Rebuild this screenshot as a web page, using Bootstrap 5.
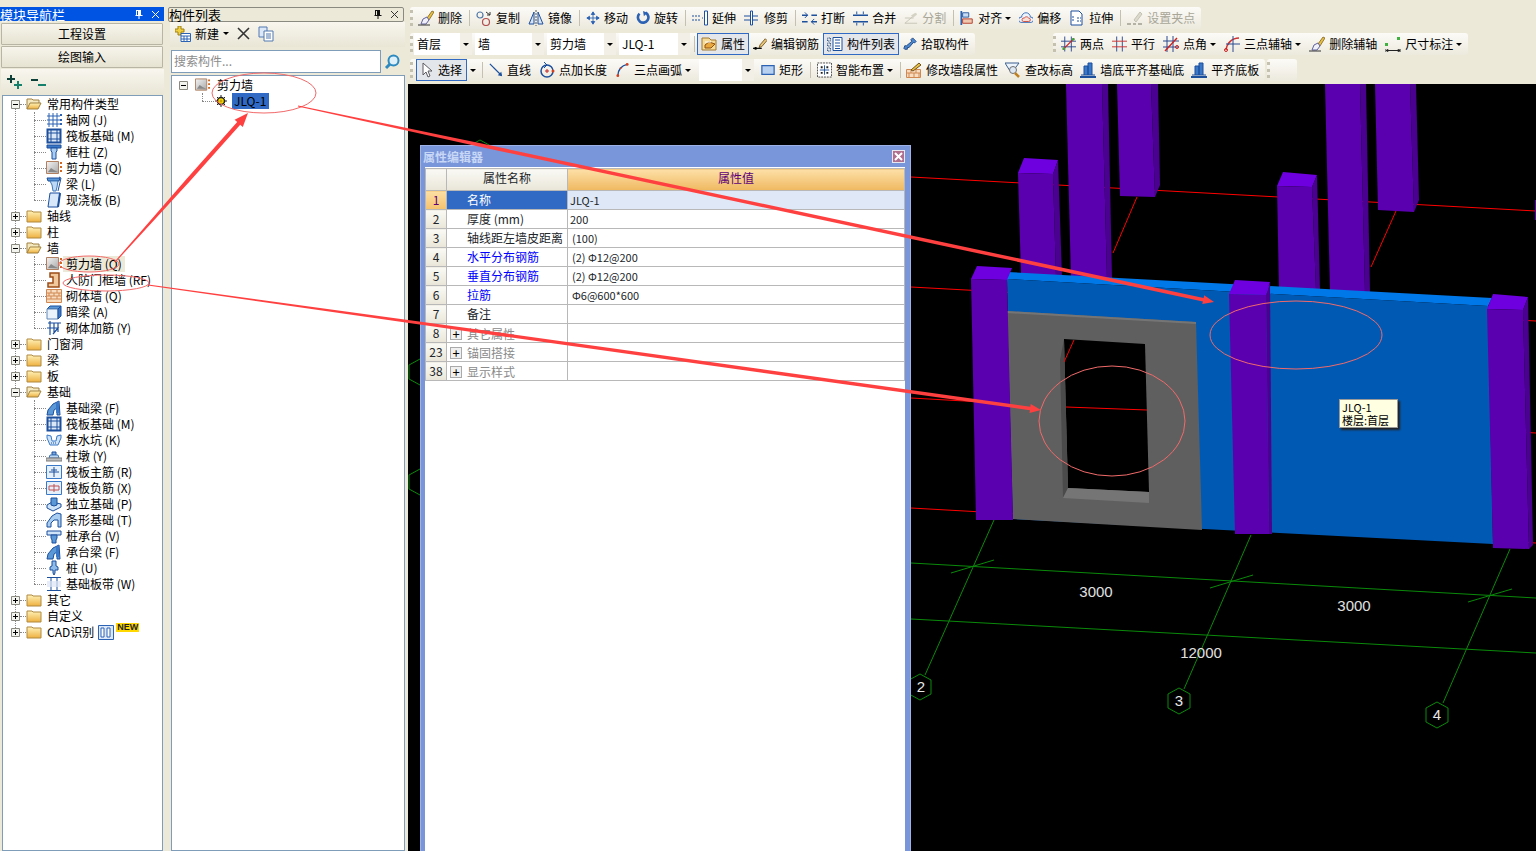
<!DOCTYPE html>
<html lang="zh-CN">
<head>
<meta charset="UTF-8">
<meta name="viewport" content="width=device-width, initial-scale=1.0">
<title>模块导航栏</title>
<link href="https://cdn.jsdelivr.net/npm/bootstrap@5.3.0/dist/css/bootstrap.min.css" rel="stylesheet">
<style>
html, body { height: 100%; }
body { background: #ece9d8; font-family: "Noto Sans CJK SC", "Liberation Sans", sans-serif; font-size: 12px; line-height: 16px; color: #000; overflow: hidden; }
svg { display: block; flex: none; }
.app-root { height: 851px; position: relative; }

/* side panels */
.nav-col { width: 164px; padding-top: 7px; flex: none; }
.list-col { width: 237px; margin-left: 4px; padding-top: 7px; flex: none; }
.pane-title { height: 14px; font-size: 13px; line-height: 13px; padding-right: 4px; }
.pane-title.on { background: #0054e3; color: #fff; }
.pane-title.off { background: #ece9d8; border: 1px solid #8a8a80; border-radius: 2px; height: 15px; margin-right: 1px; }
.nav-btn { display: block; width: 162px; margin: 1px 0 0 1px; height: 22px; padding: 0; font-size: 12px; line-height: 20px; color: #000; border: 1px solid #b8b5a4; border-radius: 1px; background: linear-gradient(#f7f5ec, #e6e3d2); }
.nav-btn:first-of-type { margin-top: 2px; }
.expand-bar { height: 26px; margin: 1px 0 0 1px; padding-left: 6px; gap: 8px; background: linear-gradient(#f8f6ee, #e9e6d6); }
.tree-box { background: #fff; border: 1px solid #7f9db9; margin-left: 2px; }
.nav-tree { height: 756px; width: 161px; }
.tree-list { position: relative; }
.tree-list::before { content: ""; position: absolute; left: 12px; top: 8px; bottom: 8px; border-left: 1px dotted #888; }
.tree-row { height: 16px; display: flex; align-items: center; position: relative; white-space: nowrap; }
.root-row { padding-left: 8px; }
.root-row::before { content: ""; position: absolute; left: 17px; top: 8px; width: 6px; border-top: 1px dotted #888; }
.root-row .fold { margin-left: 6px; margin-right: 5px; position: relative; }
.root-row .exp { position: relative; z-index: 1; }
.tree-kids { position: relative; }
.tree-kids::before { content: ""; position: absolute; left: 31px; top: 0; bottom: 8px; border-left: 1px dotted #888; }
.kid-row { padding-left: 43px; gap: 4px; }
.kid-row::before { content: ""; position: absolute; left: 31px; top: 8px; width: 12px; border-top: 1px dotted #888; }
.hot-label { background: #ece9d8; padding: 0 3px; margin-left: -3px; }
.new-tag { background: #ffd800; color: #222; font: bold 9px/9px "Liberation Sans", sans-serif; padding: 0 1px; margin: -9px 0 0 2px; }

.list-tools { height: 25px; padding: 0 0 2px 5px; margin: 0 0 0 2px; background: linear-gradient(#f8f6ee, #e9e6d6); }
.list-search { margin: 3px 0 0 3px; height: 23px; width: 233px; }
.list-search .form-control { height: 23px; min-height: 0; padding: 0 2px 3px; font-size: 12px; line-height: 16px; border: 1px solid #7f9db9; border-radius: 0; }
.list-search .form-control::placeholder { color: #8c8c8c; }
.find-btn { width: 24px; flex: none; background: #ece9d8; }
.list-tree { margin-left: 3px; margin-top: 2px; height: 776px; width: 234px; padding-top: 1px; position: relative; }
.list-tree .tree-row.top { padding-left: 7px; gap: 7px; }
.list-tree .tree-row.sub { padding-left: 43px; gap: 5px; }
.list-tree .tree-row.sub::before { content: ""; position: absolute; left: 30px; top: 8px; width: 12px; border-top: 1px dotted #888; }
.list-tree .tree-row.sub::after { content: ""; position: absolute; left: 30px; top: 0; height: 8px; border-left: 1px dotted #888; }
.sel-node { background: #316ac5; padding: 0 3px 0 2px; width: 37px; }

/* toolbars */
.work-col { margin-left: 3px; min-width: 0; }
.tool-area { height: 84px; padding-top: 5px; flex: none; }
.tool-strip { height: 26px; padding-left: 2px; align-items: center; }
.tool-bar { height: 22px; display: flex; align-items: center; padding-right: 2px; border-radius: 3px; background: linear-gradient(#fcfbf7, #ece9dd); white-space: nowrap; }
.grip { width: 3px; height: 16px; margin: 0 1px 0 0; border-left: 3px dotted #c4c1b0; }
.tool-btn { display: flex; align-items: center; gap: 4px; padding: 0 4px; height: 22px; }
.tool-btn.off { color: #a8a698; }
.tool-btn.lit { background: #e3e6ea; border: 1px solid #316ac5; padding: 0 3px; }
.tool-btn.pick-on { margin-left: 2px; padding: 0 4px; gap: 5px; }
.tool-btn.tight { padding-left: 3px; }
.tool-sep { width: 1px; height: 16px; margin: 0 2px 0 3px; background: #c4c1b0; }
.tool-sep.near { margin-left: 1px; }
.caret-mark { width: 0; height: 0; border-left: 3px solid transparent; border-right: 3px solid transparent; border-top: 3px solid #000; margin-left: -1px; }
.caret-side { margin: 0 3px; }
.combo-box { height: 22px; margin-right: 3px; background: #fff; display: flex; justify-content: space-between; align-items: center; padding-left: 3px; }
.combo-box.shift { margin-left: 4px; }
.combo-arrow { width: 12px; height: 22px; background: #f2f0e6; display: flex; align-items: center; justify-content: center; }
.combo-arrow .caret-mark { margin: 0; }
.gap-two { margin-left: 78px; }
.gap-one { margin-left: 2px; }

/* canvas */
.scene-box { background: #000; position: relative; overflow: hidden; }
.scene-svg { position: absolute; left: 0; top: 0; }
.dim-label { font: 15px "Liberation Sans", sans-serif; fill: #e0e0e0; text-anchor: middle; }
.axis-label { font: 15px "Liberation Sans", sans-serif; fill: #e8e8e8; text-anchor: middle; }
.hover-tip { position: absolute; left: 931px; top: 315px; width: 59px; height: 29px; background: #ffffe1; border: 1px solid #999; box-shadow: 2px 2px 2px #222; padding: 1px 2px; font-size: 11px; line-height: 13px; }

/* property dialog */
.prop-win { position: absolute; left: 12px; top: 61px; width: 491px; bottom: 0; background: #7a96da; border: 1px solid #9db3e8; border-bottom: 0; padding: 0 5px 0 4px; display: flex; flex-direction: column; }
.prop-head { height: 21px; flex: none; color: #c7d7f5; font-size: 12px; font-weight: 700; line-height: 18px; margin-left: -2px; }
.prop-x { width: 13px; height: 13px; background: #b07090; border: 1px solid #e8e8f0; color: #fff; }
.prop-body { background: #fff; flex: 1; padding-top: 1px; }
.prop-table { table-layout: fixed; width: 480px; margin: 0; border-collapse: collapse; --bs-table-bg: transparent; }
.prop-table th, .prop-table td { height: 19px; padding: 0; border: 1px solid #b8b8b8; font-weight: 400; line-height: 14px; font-size: 12px; white-space: nowrap; overflow: hidden; vertical-align: middle; }
.prop-table thead th { height: 22px; padding-bottom: 3px; text-align: center; vertical-align: middle; background: linear-gradient(#faf9f4, #e9e6d8); }
.prop-table thead th.val-head { background: linear-gradient(#fde0a8, #efb860); color: #5c007a; }
.prop-table .num { width: 21px; text-align: center; background: linear-gradient(#faf9f4, #e9e6d8); }
.prop-table .num.cur { background: linear-gradient(#fddfa4, #f5c26e); color: #5c007a; }
.prop-table .nm { padding-left: 20px; }
.prop-table .nm.cur { background: #316ac5; color: #fff; }
.prop-table .nm-head { width: 121px; }
.prop-table .vl { padding-left: 4px; font-size: 11px; }
.prop-table .vl.cur { background: #dfe8f6; }
.prop-table .vl.flush { padding-left: 2px; }
.prop-table .link-name { color: #0000ff; }
.prop-table .dim-name { color: #8a8a8a; padding-left: 3px; }
.dim-name span { display: inline-block; vertical-align: middle; }
.plus-box { width: 12px; height: 12px; border: 1px solid #aaa; background: #f0f0f0; color: #000; line-height: 9px; text-align: center; margin-right: 5px; font-size: 13px; }

.note-layer { position: absolute; left: 0; top: 0; pointer-events: none; }
</style>
</head>
<body>

<svg width="0" height="0" class="position-absolute">
  <defs>
    <linearGradient id="gFold" x1="0" y1="0" x2="0" y2="1"><stop offset="0" stop-color="#fff2b8"/><stop offset="1" stop-color="#eeb040"/></linearGradient>
    <linearGradient id="gWall" x1="0" y1="0" x2="1" y2="1"><stop offset="0" stop-color="#f4f4f4"/><stop offset="1" stop-color="#a8a8a8"/></linearGradient>
    <symbol id="i-closed" viewBox="0 0 16 16"><path d="M1 4V3h5l1 1h8v10H1z" fill="url(#gFold)" stroke="#b08a40"/></symbol>
    <symbol id="i-open" viewBox="0 0 16 16"><path d="M1 13V3h5l1 1h6v3" fill="#f4e8c0" stroke="#a08040"/><path d="M1 13l3-6h11l-3 6z" fill="url(#gFold)" stroke="#a08040"/></symbol>
    <symbol id="i-grid" viewBox="0 0 16 16"><path d="M3 1v14M7 1v14M11 1v14M1 4h13M1 8h13M1 12h13" stroke="#2c62b4" fill="none"/><path d="M14 2h2v2h-2zM14 7h2v2h-2zM14 11h2v2h-2z" fill="#2c62b4"/></symbol>
    <symbol id="i-raft" viewBox="0 0 16 16"><path d="M1.500 1.500h13v13h-13z" fill="#dbe6f6" stroke="#1c4f9c" stroke-width="2"/><path d="M5 1v14M11 1v14M1 5h14M1 11h14" stroke="#1c4f9c"/></symbol>
    <symbol id="i-col" viewBox="0 0 16 16"><path d="M1 1h14v3H1z" fill="#3a78c8" stroke="#1c4f9c"/><path d="M5 4h6v3l-1 1v7H6V8L5 7z" fill="#a8cdf0" stroke="#1c4f9c"/></symbol>
    <symbol id="i-wall" viewBox="0 0 16 16"><path d="M.5 1.500h12v12H.5z" fill="url(#gWall)" stroke="#b08060"/><path d="M2 12l3-4 3 2 4 2z" fill="#888"/><path d="M14 2h2v2h-2zM14 6h2v2h-2zM14 10h2v2h-2z" fill="#d06820"/></symbol>
    <symbol id="i-beam" viewBox="0 0 16 16"><path d="M1 2h13l-1 3H2z" fill="#5a98d8" stroke="#1c4f9c"/><path d="M4 5h8l-1 6-1 4H7L6 9z" fill="#bcd8f4" stroke="#4078b8"/><path d="M13 1l2 1-3 13" stroke="#1c4f9c" fill="none"/></symbol>
    <symbol id="i-slab" viewBox="0 0 16 16"><path d="M4 1h10l-2 14H2z" fill="#d8e8fa" stroke="#1c4f9c"/><path d="M12 15l2-14" stroke="#1c4f9c" stroke-width="2"/></symbol>
    <symbol id="i-door" viewBox="0 0 16 16"><path d="M4 1h9v14H2v-4h5V5H4z" fill="#f0c89c" stroke="#9c4c18" stroke-width="1.500"/></symbol>
    <symbol id="i-brick" viewBox="0 0 16 16"><path d="M.5 1.500h15v13H.5z" fill="#f8dcc0" stroke="#d08850"/><path d="M1 5h14M1 8h14M1 11h14M5 2v3M11 2v3M3 5v3M8 5v3M13 5v3M5 8v3M11 8v3" stroke="#d08850" fill="none"/></symbol>
    <symbol id="i-hbeam" viewBox="0 0 16 16"><path d="M1 5l3-3h11l-3 3z" fill="#5a98d8" stroke="#1c4f9c"/><path d="M1 5h11v10H1z" fill="#eaf2fb" stroke="#6088b8"/><path d="M12 5l3-3v10l-3 3z" fill="#3a78c8" stroke="#1c4f9c"/></symbol>
    <symbol id="i-rebar" viewBox="0 0 16 16"><path d="M2 3h13M4 1v14M8 3v9M12 3v9M1 8h11l-5 6" stroke="#1c4f9c" fill="none" stroke-width="1.200"/></symbol>
    <symbol id="i-fbeam" viewBox="0 0 16 16"><path d="M1 15l1-5 5-6 6-3 1 14h-3V8L8 10l-1 5z" fill="#5a98d8" stroke="#1c4f9c"/><path d="M10 3l3-2v12h-3z" fill="#3a78c8"/></symbol>
    <symbol id="i-pit" viewBox="0 0 16 16"><path d="M1 3l4 1 1 5h4l1-5 4-1v3l-3 7H4L1 6z" fill="#cfe4f8" stroke="#3a78c8"/><path d="M5 11h6" stroke="#1c4f9c" stroke-dasharray="1 1"/></symbol>
    <symbol id="i-pier" viewBox="0 0 16 16"><path d="M6 4h4v3H6z" fill="#7aa8dc" stroke="#1c4f9c"/><path d="M4 7h8l1 3H3z" fill="#bcd8f4" stroke="#4078b8"/><path d="M0 10h16v3H0z" fill="#bdbdbd" stroke="#7c7c7c"/></symbol>
    <symbol id="i-main" viewBox="0 0 16 16"><path d="M.5 1.500h15v13H.5z" fill="#e6f0fa" stroke="#3a78c8"/><path d="M8 3v10M3 8h10M5 6h6" stroke="#1c4f9c" fill="none"/></symbol>
    <symbol id="i-neg" viewBox="0 0 16 16"><path d="M.5 1.500h15v13H.5z" fill="#e6f0fa" stroke="#3a78c8"/><path d="M8 4v8M3 6h10v4H3z" stroke="#c05050" fill="none"/></symbol>
    <symbol id="i-iso" viewBox="0 0 16 16"><path d="M1 9l5-3 9 2v3l-8 4-6-3z" fill="#cfe4f8" stroke="#1c4f9c"/><path d="M5 2h6v7l-3 1-3-1z" fill="#5a98d8" stroke="#1c4f9c"/></symbol>
    <symbol id="i-strip" viewBox="0 0 16 16"><path d="M1 15V11l5-7 5-3 4 1v13h-3V8H8l-3 3v4z" fill="#a8cdf0" stroke="#1c4f9c"/></symbol>
    <symbol id="i-cap" viewBox="0 0 16 16"><path d="M1 3h14v4H1z" fill="#cfe4f8" stroke="#1c4f9c"/><path d="M5 7h6v3l-1 2v3H6v-3L5 10z" fill="#5a98d8" stroke="#1c4f9c"/></symbol>
    <symbol id="i-pile" viewBox="0 0 16 16"><path d="M6 1h4v5l2 1v3H9v3l-1 2-1-2v-3H4V7l2-1z" fill="#8fbbe8" stroke="#1c4f9c"/></symbol>
    <symbol id="i-band" viewBox="0 0 16 16"><path d="M1 1.500h14M1 14.500h14M5 2v12M11 2v12" stroke="#1c4f9c" fill="none"/><path d="M1 5h14v6H1z" fill="#dbe6f6" opacity=".7"/></symbol>
    <symbol id="i-del" viewBox="0 0 16 16"><path d="M9 8l5-7 2 1-5 8z" fill="#e8c040" stroke="#806020" stroke-width=".8"/><path d="M5 9l4-2 2 3-3 4H3z" fill="#f0f0f8" stroke="#6060a0"/><path d="M0 15h12" stroke="#333"/></symbol>
    <symbol id="i-copy" viewBox="0 0 16 16"><circle cx="4" cy="5" r="3" fill="none" stroke="#5078a8" stroke-width="1.200"/><circle cx="10" cy="12" r="3.500" fill="none" stroke="#b05050" stroke-width="1.200"/><path d="M10 2l4 3M14 2v3h-3" stroke="#333" fill="none"/></symbol>
    <symbol id="i-mirror" viewBox="0 0 16 16"><path d="M8 0v16" stroke="#555" stroke-dasharray="2 1"/><path d="M6 2v12H1zM10 2v12h5z" fill="#d8e4f4" stroke="#1c4f9c"/></symbol>
    <symbol id="i-move" viewBox="0 0 16 16"><path d="M8 1v14M1 8h14M8 1L6 4h4zM8 15l-2-3h4zM1 8l3-2v4zM15 8l-3-2v4z" fill="#2c62b4" stroke="#2c62b4"/></symbol>
    <symbol id="i-rot" viewBox="0 0 16 16"><path d="M4 3a6 6 0 1 0 7-1" fill="none" stroke="#2c62b4" stroke-width="3"/><path d="M8 0l5 2-4 4z" fill="#2c62b4"/></symbol>
    <symbol id="i-ext" viewBox="0 0 16 16"><path d="M0 6h8M0 10h8" stroke="#1c4f9c" stroke-dasharray="2 1"/><path d="M10 8h1" stroke="#1c4f9c"/><path d="M12.500 1h3v14h-3z" fill="#fff" stroke="#1c4f9c"/></symbol>
    <symbol id="i-trim" viewBox="0 0 16 16"><path d="M0 6h15M0 10h15" stroke="#1c4f9c" stroke-dasharray="6 2"/><path d="M6.500 1h2v14h-2z" fill="#fff" stroke="#1c4f9c"/></symbol>
    <symbol id="i-brk" viewBox="0 0 16 16"><path d="M0 5h6M10 5h6M0 12h6M10 12h6" stroke="#1c4f9c" stroke-width="1.500"/><path d="M3 2l3 3-3 3M13 9l-3 3 3 3" stroke="#1c4f9c" fill="none"/></symbol>
    <symbol id="i-mrg" viewBox="0 0 16 16"><path d="M0 5h16M0 12h16" stroke="#1c4f9c" stroke-width="1.500"/><path d="M4 1v3M11 1v3M4 13v3M11 13v3" stroke="#1c4f9c"/></symbol>
    <symbol id="i-split" viewBox="0 0 16 16"><path d="M1 14L14 3M1 8h10M1 14h14" stroke="#c4c2b4" fill="none"/><path d="M8 5l5-3 2 2-5 4z" fill="#d4d2c4"/></symbol>
    <symbol id="i-align" viewBox="0 0 16 16"><path d="M1.500 0v16" stroke="#2c62b4" stroke-width="2"/><path d="M3 2h7v5H3z" fill="#c8dcf4" stroke="#1c4f9c"/><path d="M3 9h11v5H3z" fill="#f0c8b0" stroke="#b03020"/></symbol>
    <symbol id="i-offs" viewBox="0 0 16 16"><path d="M2 13a3 3 0 0 1 1-6 5 5 0 0 1 10 0 3 3 0 0 1 1 6z" fill="#eef4fc" stroke="#2c62b4"/><path d="M5 12a2 2 0 0 1 1-4 3 3 0 0 1 5 0 2 2 0 0 1 0 4z" fill="#f8e0d8" stroke="#c84030"/></symbol>
    <symbol id="i-str" viewBox="0 0 16 16"><path d="M2 1h8l3 3v11H2z" fill="#fff" stroke="#1c4f9c"/><path d="M8 8h4M8 11h4M4 6v6" stroke="#1c4f9c" stroke-dasharray="2 1"/></symbol>
    <symbol id="i-grip" viewBox="0 0 16 16"><path d="M7 10l6-8 2 2-6 8z" fill="#dcdacc" stroke="#c4c2b4"/><path d="M0 14h4M6 14h3M11 14h4" stroke="#b4b2a4" stroke-width="2"/></symbol>
    <symbol id="i-attr" viewBox="0 0 16 16"><path d="M1 2h7l2 2h5v10H1z" fill="#f4dc98" stroke="#a07830"/><path d="M4 9l4-3 6 2-4 4H4z" fill="#e8a840" stroke="#905010"/><path d="M4 6h6" stroke="#fff"/></symbol>
    <symbol id="i-edit" viewBox="0 0 16 16"><path d="M8 9l6-7 2 2-6 7-3 1z" fill="#e8c878" stroke="#705020"/><path d="M0 13h10" stroke="#111" stroke-width="1.500"/><circle cx="3" cy="13" r="1.500"/></symbol>
    <symbol id="i-list" viewBox="0 0 16 16"><path d="M.500 2h3v3h-3zM.500 7h3v3h-3zM.500 12h3v3h-3z" fill="none" stroke="#3a5f90" stroke-dasharray="1 .500"/><path d="M6 1.500h9v13H6z" fill="#fff" stroke="#1c4f9c"/><path d="M8 4h5M8 7h5M8 10h5M8 12.500h5" stroke="#1c4f9c"/></symbol>
    <symbol id="i-pick" viewBox="0 0 16 16"><path d="M11 1l4 4-2 2-1-1-5 6H5v2H2l-1-1 1-3h2l6-5-1-2z" fill="#4a88d0" stroke="#1c3f7c"/></symbol>
    <symbol id="i-two" viewBox="0 0 16 16"><path d="M4 0v16M11 0v16M0 5h16M0 11h16" stroke="#2c4a90" fill="none"/><path d="M2 14L14 2" stroke="#d02020" stroke-width="1.400"/><circle cx="3" cy="13" r="1.500" fill="#40a040"/><circle cx="13" cy="3" r="1.500" fill="#40a040"/></symbol>
    <symbol id="i-par" viewBox="0 0 16 16"><path d="M5 0v16M11 0v16" stroke="#2c4a90"/><path d="M0 5h16M0 11h16" stroke="#d03030"/></symbol>
    <symbol id="i-ang" viewBox="0 0 16 16"><path d="M4 0v16M10 0v16M0 5h16M0 11h16" stroke="#2c4a90"/><path d="M2 15L14 2" stroke="#d02020" stroke-width="1.400"/><circle cx="14" cy="11" r="1.500" fill="none" stroke="#d02020"/></symbol>
    <symbol id="i-arc3" viewBox="0 0 16 16"><path d="M2 14C3 7 8 2 15 2" fill="none" stroke="#d03030" stroke-width="1.400"/><path d="M9 0v16M2 8h14" stroke="#2c4a90"/><circle cx="2" cy="14" r="1.500" fill="none" stroke="#d02020"/></symbol>
    <symbol id="i-dim" viewBox="0 0 16 16"><path d="M0 13v3M15 13v3M1 14.500h14M1 14.500l2-1v2zM15 14.500l-2-1v2z" stroke="#222" fill="none"/><path d="M0 7h3v3H0zM12 1h3v3h-3z" fill="#40b040"/></symbol>
    <symbol id="i-sel" viewBox="0 0 12 16"><path d="M2 1v12l3-3 2 5 2-1-2-5h4z" fill="#fff" stroke="#5a5a60"/></symbol>
    <symbol id="i-line" viewBox="0 0 16 16"><path d="M1 1l13 13" stroke="#1c4f9c" stroke-width="1.400"/><path d="M15 15l-5-1 4-4z" fill="#1c4f9c"/></symbol>
    <symbol id="i-len" viewBox="0 0 16 16"><circle cx="8" cy="9" r="6" fill="none" stroke="#1c4f9c" stroke-width="1.500"/><path d="M5 0l3 3-3 3" fill="none" stroke="#1c4f9c"/><path d="M6 9h4M8 7v4" stroke="#c02020"/><circle cx="14" cy="9" r="1.500" fill="#d04020"/></symbol>
    <symbol id="i-arc" viewBox="0 0 16 16"><path d="M3 14C3 8 7 3 13 2" fill="none" stroke="#1c4f9c" stroke-width="1.500"/><circle cx="3" cy="14" r="1.500" fill="#d04020"/><circle cx="13" cy="2" r="1.500" fill="#d04020"/><circle cx="6" cy="6" r="1" fill="#d04020"/></symbol>
    <symbol id="i-rect" viewBox="0 0 16 16"><path d="M1 3h14v10H1z" fill="#b8d0f0" stroke="#2c62b4" stroke-width="1.400"/></symbol>
    <symbol id="i-smart" viewBox="0 0 16 16"><path d="M.5.500h15v15H.5z" fill="#fff" stroke="#444" stroke-dasharray="2 1"/><path d="M8 3v10M3 8h10" stroke="#1c4f9c"/><path d="M4 4h2v2H4zM10 4h2v2h-2zM4 10h2v2H4zM10 10h2v2h-2z" fill="#222"/></symbol>
    <symbol id="i-mod" viewBox="0 0 16 16"><path d="M.5 7.500h14v8H.5z" fill="#f8dcc0" stroke="#d08850"/><path d="M1 11h14M5 8v3M10 8v3M3 11v4M8 11v4M13 11v4" stroke="#d08850"/><path d="M5 8l8-7 2 2-8 6z" fill="#e8c040" stroke="#705020"/></symbol>
    <symbol id="i-lvl" viewBox="0 0 16 16"><path d="M0 1h14L8 9H5z" fill="#eef4fc" stroke="#3a5f90"/><circle cx="8" cy="8" r="3.500" fill="#dce8f4" stroke="#707070"/><path d="M10 11l4 4" stroke="#c08020" stroke-width="2.500"/></symbol>
    <symbol id="i-base" viewBox="0 0 16 16"><path d="M4 4h4v9H4zM8 1h4v12H8z" fill="#3a78c8" stroke="#1c4f9c"/><path d="M0 15h16" stroke="#1c4f9c" stroke-width="2"/><path d="M1 13h3M12 13h3" stroke="#1c4f9c"/></symbol>
    <symbol id="i-add" viewBox="0 0 16 16"><path d="M3 0h3v3h3v3H6v3H3V6H0V3h3z" fill="#f0d040" stroke="#a08010"/><path d="M6 7.500h9.500v8H6z" fill="#fff" stroke="#2c62b4"/><path d="M6 10h10M9 10v5M12 10v5M6 13h10" stroke="#2c62b4"/></symbol>
    <symbol id="i-paste" viewBox="0 0 16 16"><path d="M1 1h8v10H1z" fill="#dce8f8" stroke="#5078b0"/><path d="M6 5h9v10H6z" fill="#fff" stroke="#5078b0"/><path d="M8 8h5M8 10h5M8 12h5" stroke="#5078b0"/></symbol>
    <symbol id="i-gear" viewBox="0 0 12 12"><circle cx="6" cy="6" r="3.500" fill="#ffe000" stroke="#222" stroke-width="1.500"/><path d="M6 0v3M6 9v3M0 6h3M9 6h3M2 2l2 2M8 8l2 2M10 2L8 4M4 8l-2 2" stroke="#222"/><circle cx="6" cy="6" r="1.500" fill="#d0a000"/></symbol>
    <symbol id="i-find" viewBox="0 0 16 16"><circle cx="9.500" cy="6.500" r="5" fill="#dff0fa" stroke="#2c8ac0" stroke-width="2"/><path d="M6 10l-4 4" stroke="#2c8ac0" stroke-width="3"/></symbol>
  </defs>
</svg>

<div class="app-root d-flex">

  <!-- 模块导航栏 -->
  <div class="nav-col d-flex flex-column">
    <div class="pane-title on d-flex justify-content-between align-items-center">
      <span>模块导航栏</span>
      <span class="d-flex gap-2 align-items-center">
        <svg width="9" height="11" viewBox="0 0 9 11"><path d="M2 1h5v5h1.500v1h-3v3h-1V7h-3V6H2zM3 2v4h1V2z" fill="#fff"/></svg>
        <svg width="9" height="9" viewBox="0 0 9 9"><path d="M1 1l7 7M8 1L1 8" stroke="#fff"/></svg>
      </span>
    </div>
    <button type="button" class="btn nav-btn">工程设置</button>
    <button type="button" class="btn nav-btn">绘图输入</button>
    <div class="expand-bar d-flex align-items-center">
      <svg width="16" height="16" viewBox="0 0 16 16"><path d="M3 1h2v3h3v2H5v3H3V6H0V4h3z" fill="#0c4038"/><path d="M10 7h2v3h3v2h-3v3h-2v-3H7v-2h3z" fill="#15806c"/></svg>
      <svg width="16" height="16" viewBox="0 0 16 16"><path d="M0 5h7v2H0z" fill="#0c4038"/><path d="M7 10h8v2H7z" fill="#15806c"/></svg>
    </div>
    <div class="tree-box nav-tree"><div class="tree-list" id="navTree"></div></div>
  </div>

  <!-- 构件列表 -->
  <div class="list-col d-flex flex-column">
    <div class="pane-title off d-flex justify-content-between align-items-center">
      <span>构件列表</span>
      <span class="d-flex gap-2 align-items-center">
        <svg width="9" height="11" viewBox="0 0 9 11"><path d="M2 1h5v5h1.500v1h-3v3h-1V7h-3V6H2zM3 2v4h1V2z" fill="#111"/></svg>
        <svg width="9" height="9" viewBox="0 0 9 9"><path d="M1 1l7 7M8 1L1 8" stroke="#333"/></svg>
      </span>
    </div>
    <div class="list-tools d-flex align-items-center">
      <svg width="16" height="16"><use href="#i-add"/></svg>
      <span class="ms-1">新建</span>
      <span class="caret-mark ms-1"></span>
      <svg class="ms-2" width="13" height="13" viewBox="0 0 13 13"><path d="M1 1l11 11M12 1L1 12" stroke="#333" stroke-width="1.600"/></svg>
      <svg class="ms-2" width="16" height="16"><use href="#i-paste"/></svg>
    </div>
    <div class="input-group flex-nowrap list-search">
      <input type="text" class="form-control" placeholder="搜索构件...">
      <span class="find-btn d-flex align-items-center justify-content-center"><svg width="16" height="16"><use href="#i-find"/></svg></span>
    </div>
    <div class="tree-box list-tree">
      <div class="tree-row top">
        <svg class="exp" width="9" height="9" viewBox="0 0 9 9"><path d="M.5.500h8v8h-8z" fill="#f4f4ee" stroke="#8a8a80"/><path d="M2 4.500h5" stroke="#000"/></svg>
        <svg width="15" height="16"><use href="#i-wall"/></svg>
        <span>剪力墙</span>
      </div>
      <div class="tree-row sub">
        <svg width="12" height="12"><use href="#i-gear"/></svg>
        <span class="sel-node">JLQ-1</span>
      </div>
    </div>
  </div>

  <!-- 工具栏和绘图区 -->
  <div class="work-col flex-grow-1 d-flex flex-column">
    <div class="tool-area">
      <div class="tool-strip d-flex" id="strip1"></div>
      <div class="tool-strip d-flex" id="strip2"></div>
      <div class="tool-strip d-flex" id="strip3"></div>
    </div>
    <div class="scene-box flex-grow-1">
      <svg class="scene-svg" width="1128" height="767" viewBox="408 84 1128 767">
        <!-- 红色轴线 -->
        <g stroke="#f00" fill="none">
          <path d="M911 177L1536 211M911 287L1536 321M911 398L1536 433M911 508L1536 543"/>
          <path d="M1137 197L1113 253M1396 211L1371 267"/>
        </g>
        <!-- 后排柱 -->
        <g id="backCols"></g>
        <!-- 墙 -->
        <polygon points="1007,272 1492,298 1488,306 1007,279" fill="#0078e8"/>
        <polygon points="1007,279 1488,306 1493,544 1013,519" fill="#005ab4"/>
        <polygon points="1007,311 1196,322 1202,530 1013,519" fill="#5f5f5f"/>
        <polygon points="1007,311 1196,322 1196,324 1007,313" fill="#757575"/>
        <polygon points="1064,339 1145,344 1149,492 1068,488" fill="#000"/>
        <polygon points="1064,339 1060,360 1063,498 1068,488" fill="#4b4b4b"/>
        <polygon points="1068,488 1149,492 1149,503 1063,498" fill="#757575"/>
        <path d="M1074,340L1064,362M1066,407L1147,410" stroke="#f00" fill="none"/>
        <!-- 前排柱 -->
        <g id="frontCols"></g>
        <rect x="1535" y="200" width="1" height="20" fill="#5b00ae"/>
        <!-- 绿色标注 -->
        <g stroke="#0a8a0a" fill="none">
          <path d="M911 563L1536 598M911 619L1536 653"/>
          <path d="M994 520L925 675M1251 535L1184 689M1510 549L1443 703"/>
          <path d="M951 573L994 560M1210 588L1253 575M1468 602L1512 589"/>
          <polygon points="920,674 931,680 931,694 920,700 909,694 909,680"/>
          <polygon points="1179,688 1190,694 1190,708 1179,714 1168,708 1168,694"/>
          <polygon points="1437,702 1448,708 1448,722 1437,728 1426,722 1426,708"/>
          <polygon points="420,359 431,365 431,379 420,385 409,379 409,365"/>
          <polygon points="420,469 431,475 431,489 420,495 409,489 409,475"/>
          <polygon points="480,140 491,146 491,160 480,166 469,160 469,146"/>
        </g>
        <text class="dim-label" x="1096" y="597">3000</text>
        <text class="dim-label" x="1354" y="611">3000</text>
        <text class="dim-label" x="1201" y="658">12000</text>
        <text class="axis-label" x="921" y="692">2</text>
        <text class="axis-label" x="1179" y="706">3</text>
        <text class="axis-label" x="1437" y="720">4</text>
      </svg>
      <div class="hover-tip">JLQ-1<br>楼层:首层</div>

      <!-- 属性编辑器 -->
      <div class="prop-win">
        <div class="prop-head d-flex justify-content-between align-items-center">
          <span>属性编辑器</span>
          <span class="prop-x d-flex align-items-center justify-content-center"><svg width="9" height="9" viewBox="0 0 9 9"><path d="M1 1l7 7M8 1L1 8" stroke="#fff" stroke-width="2"/></svg></span>
        </div>
        <div class="prop-body">
          <table class="table prop-table">
            <thead>
              <tr><th class="num"></th><th class="nm-head">属性名称</th><th class="val-head">属性值</th></tr>
            </thead>
            <tbody id="propRows"></tbody>
          </table>
        </div>
      </div>
    </div>
  </div>

  <!-- 批注 -->
  <svg class="note-layer" width="1536" height="851" viewBox="0 0 1536 851">
    <g fill="none" stroke="#f26a6a">
      <ellipse cx="264" cy="93" rx="52" ry="20"/>
      <ellipse cx="89" cy="264" rx="30" ry="8"/>
      <ellipse cx="106" cy="283" rx="43" ry="8"/>
      <ellipse cx="1296" cy="335" rx="86" ry="34"/>
      <ellipse cx="1112" cy="421" rx="73" ry="55"/>
    </g>
    <g id="noteArrows" fill="#ff4040"></g>
  </svg>
</div>

<script>
  const ic = (id, w = 16, h = 16) => `<svg width="${w}" height="${h}"><use href="#i-${id}"/></svg>`;

  // 左侧树
  const navData = [
    ["常用构件类型", [["grid","轴网 (J)"],["raft","筏板基础 (M)"],["col","框柱 (Z)"],["wall","剪力墙 (Q)"],["beam","梁 (L)"],["slab","现浇板 (B)"]]],
    ["轴线"], ["柱"],
    ["墙", [["wall","剪力墙 (Q)",1],["door","人防门框墙 (RF)"],["brick","砌体墙 (Q)"],["hbeam","暗梁 (A)"],["rebar","砌体加筋 (Y)"]]],
    ["门窗洞"], ["梁"], ["板"],
    ["基础", [["fbeam","基础梁 (F)"],["raft","筏板基础 (M)"],["pit","集水坑 (K)"],["pier","柱墩 (Y)"],["main","筏板主筋 (R)"],["neg","筏板负筋 (X)"],["iso","独立基础 (P)"],["strip","条形基础 (T)"],["cap","桩承台 (V)"],["fbeam","承台梁 (F)"],["pile","桩 (U)"],["band","基础板带 (W)"]]],
    ["其它"], ["自定义"], ["CAD识别"]
  ];
  const expBox = open => `<svg class="exp" width="9" height="9" viewBox="0 0 9 9"><path d="M.5.500h8v8h-8z" fill="#f4f4ee" stroke="#8a8a80"/><path d="M2 4.500h5${open ? "" : "M4.500 2v5"}" stroke="#000"/></svg>`;
  let navHtml = "";
  navData.forEach(([name, kids]) => {
    const extra = name === "CAD识别"
      ? `<svg class="ms-1" width="16" height="15" viewBox="0 0 16 15"><path d="M.5.500h15v14H.5z" fill="#dce8f8" stroke="#2c62b4"/><path d="M3 3h3v9H3zM9 3h3v9H9z" fill="#fff" stroke="#2c62b4"/></svg><span class="new-tag">NEW</span>` : "";
    navHtml += `<div class="tree-row root-row">${expBox(!!kids)}<span class="fold">${ic(kids ? "open" : "closed")}</span><span>${name}</span>${extra}</div>`;
    if (kids) {
      navHtml += `<div class="tree-kids">` + kids.map(k =>
        `<div class="tree-row kid-row">${ic(k[0])}<span class="${k[2] ? "hot-label" : ""}">${k[1]}</span></div>`).join("") + `</div>`;
    }
  });
  document.getElementById("navTree").innerHTML = navHtml;

  // 工具栏
  const btn = (icon, text, o = {}) =>
    `<div class="tool-btn${o.off ? " off" : ""}${o.lit ? " lit" : ""}${o.cls ? " " + o.cls : ""}">${ic(icon, o.w || 16)}<span>${text}</span>${o.caret ? '<span class="caret-mark"></span>' : ""}</div>`;
  const sep = '<div class="tool-sep"></div>';
  const grip = '<div class="grip"></div>';
  const combo = (text, w, cls = "") => `<div class="combo-box ${cls}" style="width:${w}px"><span>${text}</span><span class="combo-arrow"><span class="caret-mark"></span></span></div>`;
  const bar = (inner, cls = "") => `<div class="tool-bar ${cls}">${inner}</div>`;

  document.getElementById("strip1").innerHTML = bar(grip +
    btn("del","删除") + sep + btn("copy","复制") + btn("mirror","镜像") + sep +
    btn("move","移动",{w:14}) + btn("rot","旋转",{w:14}) + sep +
    btn("ext","延伸") + btn("trim","修剪") + sep +
    btn("brk","打断",{w:15}) + btn("mrg","合并",{w:15}) + btn("split","分割",{off:1,w:14}) + sep +
    btn("align","对齐",{w:14,caret:1}) + btn("offs","偏移",{w:14}) + btn("str","拉伸") + sep +
    btn("grip","设置夹点",{off:1}));

  document.getElementById("strip2").innerHTML = bar(grip +
    combo("首层",58) + combo("墙",69) + combo("剪力墙",69) + combo("JLQ-1",71) + '<div class="tool-sep near"></div>' +
    btn("attr","属性",{lit:1}) + btn("edit","编辑钢筋",{w:14}) + btn("list","构件列表",{lit:1}) + btn("pick","拾取构件",{w:14})) +
    bar(grip + btn("two","两点",{w:15}) + btn("par","平行",{w:15}) + btn("ang","点角",{caret:1}) + btn("arc3","三点辅轴",{caret:1}) + btn("del","删除辅轴") + btn("dim","尺寸标注",{caret:1}), "gap-two");

  document.getElementById("strip3").innerHTML = bar(grip +
    btn("sel","选择",{lit:1,w:12,cls:"pick-on"}) + '<span class="caret-mark caret-side"></span>' + sep +
    btn("line","直线",{w:14}) + btn("len","点加长度") + btn("arc","三点画弧",{w:15,caret:1}) + combo("",55,"shift") +
    btn("rect","矩形",{w:14}) + sep + btn("smart","智能布置",{w:15,caret:1}) + sep +
    btn("mod","修改墙段属性",{cls:"tight"}) + btn("lvl","查改标高",{cls:"tight"}) + btn("base","墙底平齐基础底",{cls:"tight"}) + btn("base","平齐底板",{cls:"tight"})) +
    bar(grip + '<div class="ms-4"></div>', "gap-one");

  // 属性表
  const propData = [
    [1,"名称","JLQ-1"],[2,"厚度 (mm)","200"],[3,"轴线距左墙皮距离","(100)"],
    [4,"水平分布钢筋","(2) Φ12@200","l"],[5,"垂直分布钢筋","(2) Φ12@200","l"],[6,"拉筋","Φ6@600*600","l"],
    [7,"备注",""],[8,"其它属性","","g"],[23,"锚固搭接","","g"],[38,"显示样式","","g"]
  ];
  document.getElementById("propRows").innerHTML = propData.map(([n, name, val, kind]) => {
    const cur = n === 1 ? " cur" : "";
    const flush = n < 3 ? " flush" : "";
    const nameCell = kind === "g"
      ? `<td class="nm dim-name"><span class="plus-box">+</span><span>${name}</span></td>`
      : `<td class="nm${cur}${kind === "l" ? " link-name" : ""}">${name}</td>`;
    return `<tr><th class="num${cur}">${n}</th>${nameCell}<td class="vl${cur}${flush}">${val}</td></tr>`;
  }).join("");

  // 三维柱子
  const poly = (pts, fill) => `<polygon points="${pts}" fill="${fill}"/>`;
  const FRONT = "#5b00ae", SIDE = "#4a0090", TOP = "#6e00e0";
  document.getElementById("backCols").innerHTML =
    poly("1024,158 1058,160 1053,174 1018,173", TOP) + poly("1018,173 1053,174 1056,277 1021,275", FRONT) + poly("1058,160 1053,174 1056,277 1062,277", SIDE) +
    poly("1283,172 1317,175 1312,187 1277,186", TOP) + poly("1277,186 1312,187 1316,290 1279,290", FRONT) + poly("1317,175 1312,187 1316,290 1320,290", SIDE) +
    poly("1066,84 1102,84 1107,279 1071,279", FRONT) + poly("1102,84 1108,84 1112,279 1107,279", SIDE) +
    poly("1117,84 1151,84 1155,197 1120,196", FRONT) + poly("1151,84 1158,84 1160,185 1155,197", SIDE) +
    poly("1325,84 1360,84 1365,292 1330,292", FRONT) + poly("1360,84 1366,84 1370,292 1365,292", SIDE) +
    poly("1375,84 1410,84 1414,212 1378,210", FRONT) + poly("1410,84 1416,84 1419,200 1414,212", SIDE);
  document.getElementById("frontCols").innerHTML =
    poly("977,266 1012,268 1007,280 971,279", TOP) + poly("971,279 1007,280 1013,520 976,520", FRONT) +
    poly("1235,280 1270,282 1266,295 1229,294", TOP) + poly("1229,294 1266,295 1269,534 1235,534", FRONT) + poly("1270,282 1266,295 1269,534 1272,534", SIDE) +
    poly("1493,294 1528,297 1523,310 1487,309", TOP) + poly("1487,309 1523,310 1529,549 1493,548", FRONT) + poly("1528,297 1523,310 1529,549 1533,545", SIDE);

  // 批注箭头：尾部细，到 t 处变粗
  function arrow(x0, y0, x1, y1, w0, w1, t, hl, hw) {
    const len = Math.hypot(x1 - x0, y1 - y0), ux = (x1 - x0) / len, uy = (y1 - y0) / len, nx = -uy, ny = ux;
    const mx = x0 + (x1 - x0) * t, my = y0 + (y1 - y0) * t;
    const bx = x1 - ux * hl, by = y1 - uy * hl;
    const side = s => [[x0 + s * nx * w0 / 2, y0 + s * ny * w0 / 2], [mx + s * nx * w1 / 2, my + s * ny * w1 / 2], [bx + s * nx * w1 / 2, by + s * ny * w1 / 2], [bx + s * nx * hw / 2, by + s * ny * hw / 2]];
    const pts = [...side(1), [x1, y1], ...side(-1).reverse()];
    return `<polygon points="${pts.map(p => p[0].toFixed(1) + "," + p[1].toFixed(1)).join(" ")}"/>`;
  }
  document.getElementById("noteArrows").innerHTML =
    arrow(298, 106, 1214, 302, 1, 3.5, 0.2, 11, 9) +
    arrow(148, 285, 1041, 410, 1, 3.5, 0.4, 11, 9) +
    arrow(115, 262, 248, 113, 1, 4, 0.55, 14, 11);
</script>
<script src="https://cdn.jsdelivr.net/npm/bootstrap@5.3.0/dist/js/bootstrap.bundle.min.js"></script>
</body>
</html>
